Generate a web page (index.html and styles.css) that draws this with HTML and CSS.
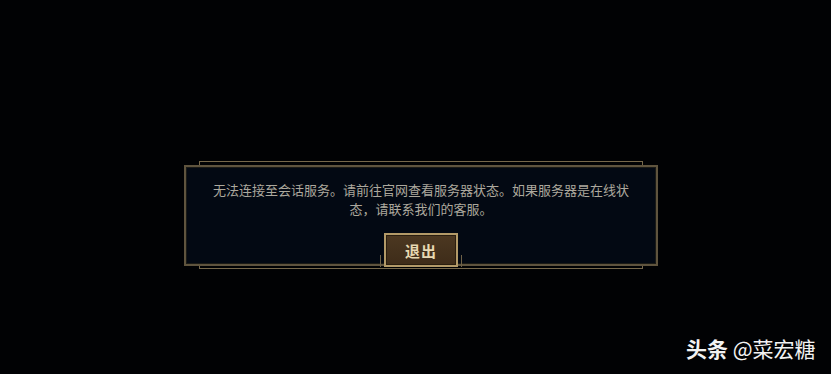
FILE: index.html
```html
<!DOCTYPE html>
<html lang="zh-CN">
<head>
<meta charset="utf-8">
<title>连接错误</title>
<link rel="stylesheet" href="styles.css">
</head>
<body>
<div class="page">
  <div class="modal">
    <div class="frame-top"></div>
    <div class="panel">
      <p class="message">无法连接至会话服务。请前往官网查看服务器状态。如果服务器是在线状态，请联系我们的客服。</p>
      <div class="btn-slot">
        <button class="btn">退出</button>
      </div>
    </div>
    <div class="frame-bottom"></div>
  </div>
  <div class="watermark"><b>头条</b> @菜宏糖</div>
</div>
</body>
</html>
```
FILE: styles.css
```css
html, body {
  margin: 0;
  padding: 0;
  background: #010204;
}
.page {
  position: relative;
  width: 831px;
  height: 374px;
  box-sizing: border-box;
  padding: 161px 0 0 184px;
  font-family: "Noto Sans CJK SC", "Noto Sans", sans-serif;
}
.modal {
  width: 474px;
}
.frame-top {
  height: 3px;
  margin: 0 15px;
  border: 1px solid #76684b;
  border-bottom: none;
}
.frame-bottom {
  height: 2px;
  margin: 0 15px;
  border: 1px solid #76684b;
  border-top: none;
}
.panel {
  background: #030913;
  border: 2px solid #5f543e;
  box-shadow: inset 0 0 0 1px #1a1a16;
  height: 101px;
  box-sizing: border-box;
  padding: 13px 26px 0;
  display: flex;
  flex-direction: column;
  align-items: center;
}
.message {
  margin: 0;
  font-size: 13px;
  line-height: 19px;
  color: #aca89d;
  text-align: center;
}
.btn-slot {
  position: relative;
  margin-top: 15px;
}
.btn-slot::before,
.btn-slot::after {
  content: "";
  position: absolute;
  bottom: 0;
  width: 1px;
  height: 12px;
  background: #6f6248;
}
.btn-slot::before { left: -4px; }
.btn-slot::after { right: -4px; }
.btn {
  display: block;
  width: 74px;
  height: 34px;
  box-sizing: border-box;
  border: 2px solid #b39a68;
  box-shadow: inset 0 0 0 1px #2a1e10;
  background: linear-gradient(#4c3821, #3e2c19);
  color: #e8d9b2;
  font-family: "Noto Sans CJK SC", sans-serif;
  font-weight: 700;
  font-size: 15px;
  letter-spacing: 1px;
  padding: 0;
}
.watermark {
  position: absolute;
  left: 686px;
  top: 334px;
  font-size: 21px;
  line-height: 28px;
  color: #f2f2f2;
}
.watermark b {
  font-weight: 700;
}
```
